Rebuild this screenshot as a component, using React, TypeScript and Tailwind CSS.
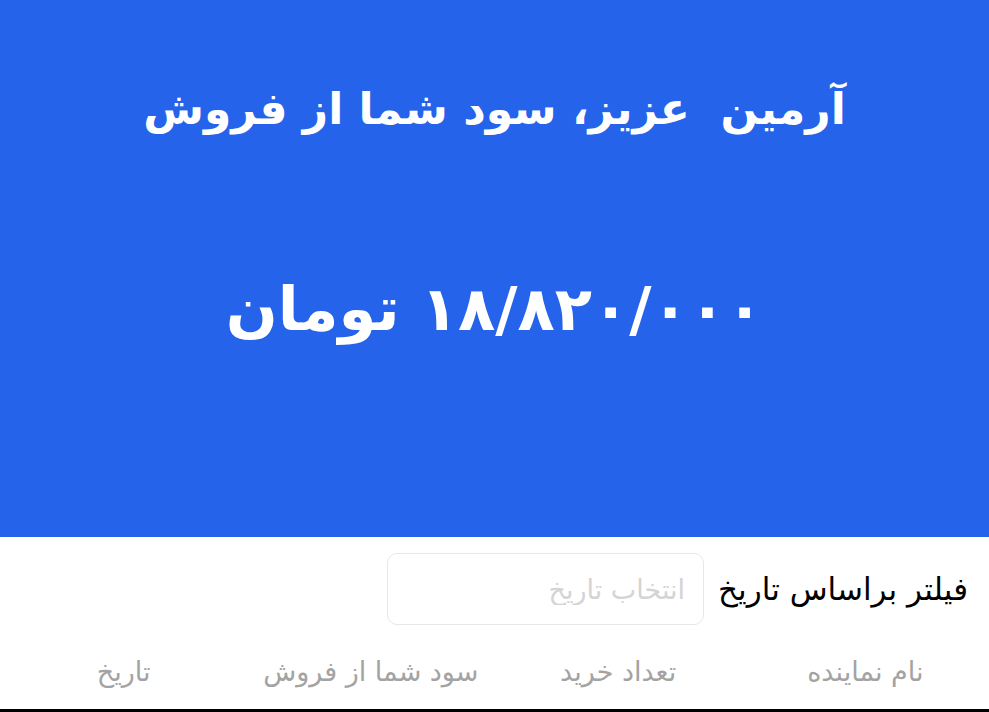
import React from "react";

const columns = ["نام نماینده", "تعداد خرید", "سود شما از فروش", "تاریخ"];

export default function App() {
  return (
    <div dir="rtl" className="w-[989px] h-[712px] overflow-hidden bg-white" style={{ fontFamily: '"DejaVu Sans", "Noto Sans", sans-serif' }}>
      {/* Profit summary banner */}
      <div className="h-[537px] bg-[#2563eb] text-white flex flex-col items-center">
        <h1 className="mt-[73px] text-[44px] font-bold leading-[72px]">آرمین&nbsp; عزیز، سود شما از فروش</h1>
        <div className="mt-[124px] text-[61px] font-bold leading-[80px]">۱۸/۸۲۰/۰۰۰ تومان</div>
      </div>

      {/* Date filter */}
      <div className="flex items-center gap-[14px] pr-[21px] pt-[16px]">
        <span className="text-[31px] text-black leading-[40px]">فیلتر براساس تاریخ</span>
        <input
          type="text"
          placeholder="انتخاب تاریخ"
          className="w-[317px] h-[72px] rounded-[10px] border border-gray-200 px-[18px] text-[27px] text-gray-700 placeholder-[#d4d4d4] focus:outline-none"
        />
      </div>

      {/* Table header */}
      <div className="grid grid-cols-4 mt-[14px] border-b-[3px] border-black">
        {columns.map((c) => (
          <div key={c} className="text-center text-[27px] text-[#a3a3a3] h-[70px] leading-[66px]">
            {c}
          </div>
        ))}
      </div>
    </div>
  );
}
